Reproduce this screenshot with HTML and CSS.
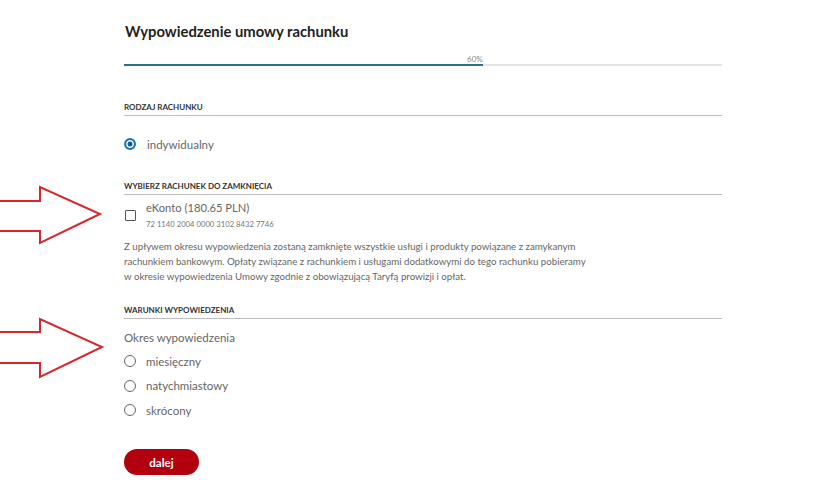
FILE: index.html
```html
<!DOCTYPE html>
<html lang="pl">
<head>
    <meta charset="UTF-8">
    <meta name="viewport" content="width=device-width, initial-scale=1.0">
    <title>Wypowiedzenie umowy rachunku</title>
    <link rel="stylesheet" href="styles.css">
</head>
<body>
    <!-- strzałki wskazujące pola formularza -->
    <svg class="arrow arrow-1" width="110" height="64" viewBox="0 0 110 64">
        <polygon points="-2,15 40,15 40,1 100,28 40,57 40,45 -2,45" />
    </svg>
    <svg class="arrow arrow-2" width="110" height="64" viewBox="0 0 110 64">
        <polygon points="-2,17 40,17 40,4 102,32 40,62 40,48 -2,48" />
    </svg>

    <main class="page">
        <h1>Wypowiedzenie umowy rachunku</h1>

        <div class="progress">
            <div class="progress-label">60%</div>
            <div class="progress-track">
                <div class="progress-fill" style="width: 60%;"></div>
            </div>
        </div>

        <form id="form-wypowiedzenie">
            <h2 class="section-title first">Rodzaj rachunku</h2>
            <label class="option option-single">
                <span class="radio checked"></span>
                <span class="option-text">indywidualny</span>
            </label>

            <h2 class="section-title second">Wybierz rachunek do zamknięcia</h2>
            <label class="account">
                <span class="checkbox"></span>
                <span class="account-info">
                    <span class="account-name">eKonto (180.65 PLN)</span>
                    <span class="account-number">72 1140 2004 0000 3102 8432 7746</span>
                </span>
            </label>

            <p class="note">Z upływem okresu wypowiedzenia zostaną zamknięte wszystkie usługi i produkty powiązane z zamykanym rachunkiem bankowym. Opłaty związane z rachunkiem i usługami dodatkowymi do tego rachunku pobieramy w okresie wypowiedzenia Umowy zgodnie z obowiązującą Taryfą prowizji i opłat.</p>

            <h2 class="section-title third">Warunki wypowiedzenia</h2>
            <div class="field-label">Okres wypowiedzenia</div>
            <div class="options">
                <label class="option"><span class="radio"></span><span class="option-text">miesięczny</span></label>
                <label class="option"><span class="radio"></span><span class="option-text">natychmiastowy</span></label>
                <label class="option"><span class="radio"></span><span class="option-text">skrócony</span></label>
            </div>

            <button type="submit" class="btn-next">dalej</button>
        </form>
    </main>
</body>
</html>
```

FILE: styles.css
```css
body {
    margin: 0;
    font-family: Lato, "Open Sans", Arial, sans-serif;
    background-color: #fff;
    color: #666;
}
.page {
    width: 598px;
    padding: 21px 0 0 124px;
}
h1 {
    margin: 0 0 0 1px;
    font-size: 14.8px;
    line-height: 20px;
    font-weight: 700;
    color: #222;
}
.progress {
    margin-top: 13px;
}
.progress-label {
    width: 60%;
    text-align: right;
    font-size: 8px;
    line-height: 10px;
    color: #888;
}
.progress-track {
    height: 2px;
    background-color: #e4e4e4;
}
.progress-fill {
    height: 100%;
    background-color: #2b7187;
}
.section-title {
    margin: 0;
    padding-bottom: 3px;
    border-bottom: 1px solid #bdbdbd;
    font-size: 8px;
    line-height: 10px;
    font-weight: 700;
    text-transform: uppercase;
    color: #333;
}
.section-title.first {
    margin-top: 36px;
}
.section-title.second {
    margin-top: 29px;
}
.section-title.third {
    margin-top: 21px;
}
.option {
    display: flex;
    align-items: center;
    gap: 11px;
    height: 16px;
}
.option-single {
    margin-top: 20px;
}
.option-text {
    font-size: 11.5px;
    color: #666;
}
.radio {
    box-sizing: border-box;
    width: 12px;
    height: 12px;
    border: 1px solid #666;
    border-radius: 50%;
}
.radio.checked {
    border: 2px solid #1a76b8;
    background-color: #0d5c9a;
    box-shadow: inset 0 0 0 1.5px #fff;
}
.account {
    display: flex;
    align-items: center;
    gap: 10px;
    margin-top: 6px;
}
.checkbox {
    box-sizing: border-box;
    width: 11px;
    height: 11px;
    margin-left: 1px;
    border: 1px solid #555;
    border-radius: 1px;
}
.account-info {
    display: flex;
    flex-direction: column;
    gap: 4px;
}
.account-name {
    font-size: 11.2px;
    line-height: 14px;
}
.account-number {
    font-size: 7.7px;
    line-height: 10px;
    color: #777;
}
.note {
    max-width: 470px;
    margin: 10px 0 0;
    font-size: 9.7px;
    line-height: 15px;
    color: #666;
}
.field-label {
    margin-top: 12px;
    font-size: 11.5px;
    line-height: 14px;
}
.options {
    display: flex;
    flex-direction: column;
    gap: 8.5px;
    margin-top: 8px;
}
.options .option {
    gap: 10px;
}
.btn-next {
    display: block;
    width: 75px;
    height: 26px;
    margin-top: 31px;
    border: none;
    border-radius: 13px;
    background-color: #b3000f;
    color: #fff;
    font-family: inherit;
    font-size: 11.5px;
    font-weight: 700;
    cursor: pointer;
}
.arrow {
    position: absolute;
    left: 0;
    overflow: visible;
}
.arrow polygon {
    fill: #fff;
    stroke: #d8262e;
    stroke-width: 2;
    stroke-linejoin: miter;
}
.arrow-1 {
    top: 186px;
}
.arrow-2 {
    top: 315px;
}
```
